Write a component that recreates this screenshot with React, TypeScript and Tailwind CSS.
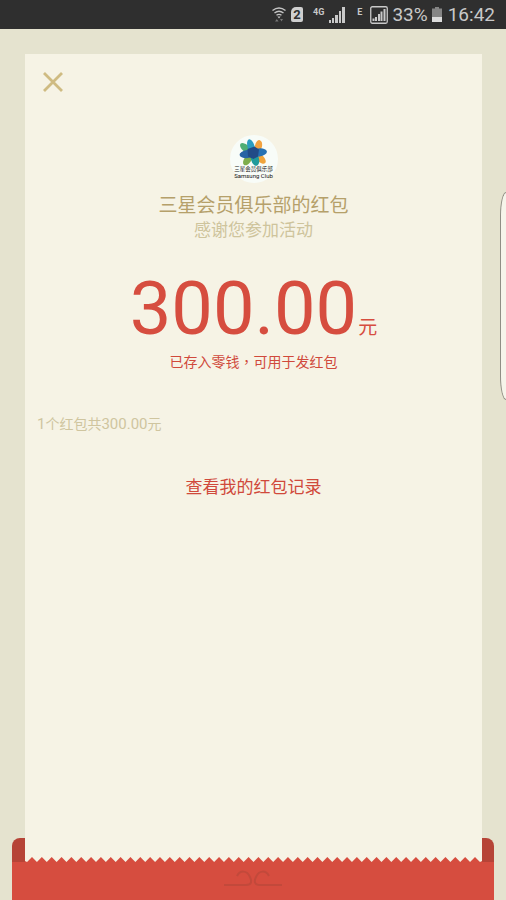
const TEETH = 45;
const TOOTH_WIDTH = 443 / TEETH;

function sawtoothPath() {
  let d = "M0 0H457V4L455 5L450 0";
  for (let i = 0; i < TEETH; i++) {
    const peak = 450 - i * TOOTH_WIDTH;
    d += `L${peak - TOOTH_WIDTH / 2} 5L${peak - TOOTH_WIDTH} 0`;
  }
  return d + "L2 5L0 4Z";
}

function StatusBar() {
  return (
    <header className="flex h-[29px] items-center justify-end bg-[#2f2f2f] pr-[11px] font-['Roboto',sans-serif] text-[19px] leading-[29px] text-[#c9c9c9]">
      <svg className="mr-[5px] h-[17px] w-[14px]" viewBox="0 0 14 17" fill="none" stroke="#c4c4c4" strokeWidth="1.4" aria-label="Wi-Fi">
        <path d="M0.5 4.5Q7 -0.5 13.5 4.5M2.5 7Q7 3.4 11.5 7M4.5 9.3Q7 7.4 9.5 9.3" />
        <path d="M5.4 10.6H8.6L7 12.4Z" fill="#c4c4c4" stroke="none" />
        <path d="M3 15.5L4.8 13L6.6 15.5ZM8 13H11L9.5 15.5Z" fill="#777" stroke="none" />
      </svg>
      <span className="mr-[10px] flex h-[15px] w-[12px] items-center justify-center rounded-[2px] rounded-tl-[5px] bg-[#cfcfcf] text-[13px] leading-[15px] font-bold text-[#2f2f2f]">
        2
      </span>
      <span className="mr-[5px] h-[18px] text-[9px] leading-[13px] font-bold">4G</span>
      <svg className="mr-[12px] h-[16px] w-[16px]" viewBox="0 0 16 16" fill="#c9c9c9" aria-label="信号">
        <path d="M0 13H2V16H0ZM3 11H5V16H3ZM6 8H9V16H6ZM10 4H12V16H10ZM13 0H16V16H13Z" />
      </svg>
      <span className="mr-[8px] h-[18px] text-[9px] leading-[13px] font-bold">E</span>
      <svg className="mr-[4px] h-[18px] w-[18px]" viewBox="0 0 18 18" fill="#c9c9c9" aria-label="信号">
        <rect x="0.75" y="0.75" width="16.5" height="16.5" rx="1.5" fill="none" stroke="#c9c9c9" strokeWidth="1.3" />
        <path d="M2.5 12.5H4.5V15H2.5ZM5 11H7V15H5ZM8 8H10V15H8ZM10.5 5.5H12.5V15H10.5ZM13.5 3H15.5V15H13.5Z" />
      </svg>
      <span className="mr-[4px]">33%</span>
      <svg className="mr-[6px] h-[15px] w-[10px]" viewBox="0 0 10 15" aria-label="电量">
        <path d="M3 0H7V1.5H10V10H0V1.5H3Z" fill="#858585" />
        <path d="M0 10H10V15H0Z" fill="#dcdcdc" />
      </svg>
      <time>16:42</time>
    </header>
  );
}

function ClubLogo() {
  return (
    <svg className="h-12 w-12" viewBox="0 0 96 96" aria-label="三星会员俱乐部">
      <circle cx="48" cy="48" r="48" fill="#f8fcf8" />
      <g transform="translate(46 36)">
        <ellipse cx="11" cy="-14" rx="7" ry="12" fill="#f2a240" transform="rotate(12 11 -14)" />
        <ellipse cx="-15" cy="-10" rx="7" ry="13" fill="#4fae74" transform="rotate(-50 -15 -10)" />
        <ellipse cx="-11" cy="14" rx="7" ry="12" fill="#7fae4c" transform="rotate(35 -11 14)" />
        <ellipse cx="15" cy="11" rx="7" ry="13" fill="#f0a43c" transform="rotate(-45 15 11)" />
        <ellipse cx="-4" cy="-13" rx="7" ry="15" fill="#2c9cc0" transform="rotate(-16 -4 -13)" />
        <ellipse cx="4" cy="12" rx="8" ry="14" fill="#219b9b" transform="rotate(-15 4 12)" />
        <ellipse cx="12" cy="-1" rx="16" ry="8" fill="#2672b4" transform="rotate(-8 12 -1)" />
        <ellipse cx="-11" cy="2" rx="16" ry="8" fill="#2863a4" transform="rotate(-8 -11 2)" />
        <path d="M-11 -8L3 -13L12 -7L10 7L1 12L-10 7Z" fill="#224b87" />
      </g>
      <text x="47" y="71" textAnchor="middle" fontSize="11" fill="#222" fontFamily="'Noto Sans CJK SC', sans-serif">
        三星会员俱乐部
      </text>
      <text x="47" y="86" textAnchor="middle" fontSize="12" fill="#111" fontFamily="'Roboto', sans-serif">
        Samsung Club
      </text>
    </svg>
  );
}

function CurlOrnament() {
  return (
    <svg className="h-[18px] w-[60px]" viewBox="0 0 60 18" fill="none" stroke="#c2493b" strokeWidth="2" aria-hidden="true">
      <path d="M1 16H23C29 16 29 12 27 8C24 1 17 1 14 7" />
      <path d="M59 16H37C31 16 31 12 33 8C36 1 43 1 46 7" />
    </svg>
  );
}

export default function App() {
  return (
    <div className="flex min-h-screen flex-col bg-[#e5e3cf] font-['Roboto','Noto_Sans_CJK_SC',sans-serif]">
      <StatusBar />
      <main className="relative flex flex-1 flex-col px-3 pt-[25px]">
        <div className="absolute top-[163px] right-0 h-[208px] w-[6px] rounded-l-[100%_24px] border border-r-0 border-[#8f8e84] bg-[#f6f4ea]" />
        <article className="mr-3 ml-[13px] flex flex-1 flex-col bg-[#f6f3e5]">
          <button type="button" aria-label="关闭" className="mt-[18px] ml-[18px] h-5 w-5 cursor-pointer">
            <svg className="h-5 w-5" viewBox="0 0 20 20" stroke="#cfbb82" strokeWidth="2.8" aria-hidden="true">
              <path d="M1 1L19 19M19 1L1 19" />
            </svg>
          </button>
          <div className="mt-[43px] flex flex-col items-center">
            <ClubLogo />
            <h1 className="mt-[11px] text-[19px] leading-6 text-[#b5a06a]">三星会员俱乐部的红包</h1>
            <p className="text-[17px] leading-6 text-[#cec49c]">感谢您参加活动</p>
            <p className="mt-[25px] flex items-baseline gap-px text-[#d64d3f]">
              <span className="text-[74px] leading-[84px]">300.00</span>
              <span className="text-[19px]">元</span>
            </p>
            <p className="text-[14px] leading-5 text-[#d0493b]">
              已存入零钱<span className="font-['Noto_Sans_CJK_TC',sans-serif]" lang="zh-Hant">{"\uFF0C"}</span>可用于发红包
            </p>
          </div>
          <p className="mt-[42px] px-3 text-[14px] leading-5 text-[#cfc59f]">
            <span className="text-[15px]">1</span>个红包共<span className="text-[15px]">300.00</span>元
          </p>
          <a href="#records" className="mt-[41px] self-center text-[17px] leading-6 text-[#d0493b]">
            查看我的红包记录
          </a>
        </article>
        <div className="flex h-6">
          <div className="w-[13px] rounded-tl-[8px] bg-[#b64437]" />
          <div className="flex flex-1 flex-col bg-[#d64d3f]">
            <div className="flex-1 bg-[#f6f3e5]" />
            <svg className="block h-[5px] w-full" viewBox="0 0 457 5" preserveAspectRatio="none" fill="#f6f3e5" aria-hidden="true">
              <path d={sawtoothPath()} />
            </svg>
          </div>
          <div className="w-3 rounded-tr-[8px] bg-[#b64437]" />
        </div>
        <footer className="flex h-[38px] justify-center bg-[#d64d3f] pt-[7px]">
          <CurlOrnament />
        </footer>
      </main>
    </div>
  );
}
